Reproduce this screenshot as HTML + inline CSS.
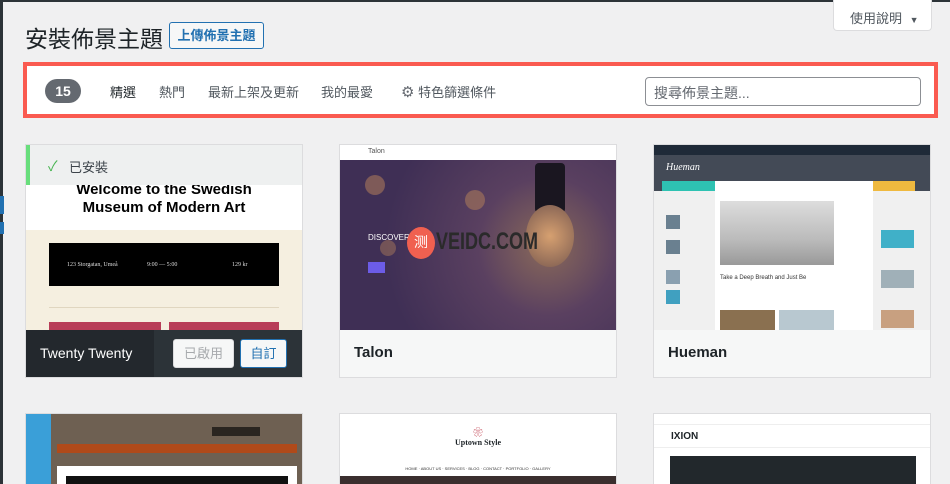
<!DOCTYPE html>
<html><head><meta charset="utf-8"><style>
*{box-sizing:border-box;margin:0;padding:0}
html,body{width:950px;height:484px;overflow:hidden}
body{background:#f0f0f1;font-family:"Liberation Sans","Noto Sans CJK TC",sans-serif;color:#1d2327;position:relative}
.abs{position:absolute}
.card{position:absolute;width:278px;height:234px;background:#fff;border:1px solid #dcdcde;overflow:hidden}
.shot{position:absolute;left:0;top:0;width:276px;height:185px;overflow:hidden}
.foot{position:absolute;left:0;top:185px;width:276px;height:48px;background:#f6f7f7;font-size:15px;font-weight:bold;padding:14px 14px}
</style></head><body>
<div class="abs" style="left:0;top:0;width:950px;height:2px;background:#2c3338"></div>
<div class="abs" style="left:0;top:0;width:3px;height:484px;background:#2c3338"></div>
<div class="abs" style="left:0;top:196px;width:4px;height:18px;background:#2271b1"></div>
<div class="abs" style="left:0;top:222px;width:4px;height:12px;background:#2271b1"></div>

<div class="abs" style="left:25px;top:20px;font-size:23px;color:#1d2327">安裝佈景主題</div>
<div class="abs" style="left:169px;top:22px;width:95px;height:27px;border:1px solid #2271b1;border-radius:3px;background:#f6f7f7;color:#2271b1;font-size:13px;font-weight:bold;text-align:center;line-height:25px">上傳佈景主題</div>
<div class="abs" style="left:833px;top:0;width:99px;height:31px;background:#fff;border:1px solid #dcdcde;border-top:none;border-radius:0 0 4px 4px;font-size:13px;color:#50575e;padding:8px 0 0 16px">使用說明 <span style="font-size:9px;margin-left:4px">▼</span></div>

<div class="abs" style="left:23px;top:62px;width:915px;height:56px;border:4px solid #fa5a50;background:#fff"></div>
<div class="abs" style="left:45px;top:79px;width:36px;height:24px;border-radius:12px;background:#646970;color:#fff;font-size:14px;font-weight:bold;text-align:center;line-height:24px">15</div>
<div class="abs" style="left:110px;top:82px;font-size:13px;color:#1d2327">精選</div>
<div class="abs" style="left:159px;top:82px;font-size:13px;color:#50575e">熱門</div>
<div class="abs" style="left:208px;top:82px;font-size:13px;color:#50575e">最新上架及更新</div>
<div class="abs" style="left:321px;top:82px;font-size:13px;color:#50575e">我的最愛</div>
<div class="abs" style="left:401px;top:82px;font-size:13px;color:#50575e"><span style="font-size:15px;color:#646970">⚙</span> 特色篩選條件</div>
<div class="abs" style="left:645px;top:77px;width:276px;height:29px;border:1px solid #8c8f94;border-radius:4px;font-size:14px;color:#646970;padding:5px 8px">搜尋佈景主題...</div>

<div class="card" style="left:25px;top:144px">
 <div class="shot" style="background:#f5efe0">
  <div class="abs" style="left:0;top:0;width:276px;height:85px;background:#fff"></div>
  <div class="abs" style="left:0;top:36px;width:276px;text-align:center;font-size:15px;font-weight:bold;line-height:18px;color:#000">Welcome to the Swedish<br>Museum of Modern Art</div>
  <div class="abs" style="left:23px;top:98px;width:230px;height:43px;background:#000;color:#ddd;font-family:'Liberation Serif',serif;font-size:6px">
   <span class="abs" style="left:18px;top:19px">123 Storgatan, Umeå</span><span class="abs" style="left:98px;top:19px">9:00 — 5:00</span><span class="abs" style="left:183px;top:19px">129 kr</span></div>
  <div class="abs" style="left:23px;top:162px;width:230px;height:1px;background:#e0d6c0"></div>
  <div class="abs" style="left:23px;top:177px;width:112px;height:10px;background:#b83d58"></div>
  <div class="abs" style="left:143px;top:177px;width:110px;height:10px;background:#b83d58"></div>
  <div class="abs" style="left:0;top:0;width:276px;height:40px;background:#eef0f0;border-left:4px solid #68de7c"></div>
  <div class="abs" style="left:22px;top:11px;color:#46b450;font-size:14px">✓</div>
  <div class="abs" style="left:43px;top:12px;font-size:13px;color:#3c434a">已安裝</div>
 </div>
 <div class="abs" style="left:0;top:185px;width:276px;height:48px;background:#2c3338"></div>
 <div class="abs" style="left:0;top:185px;width:128px;height:48px;background:#23282d"></div>
 <div class="abs" style="left:14px;top:200px;font-size:14px;color:#fff">Twenty Twenty</div>
 <div class="abs" style="left:147px;top:194px;width:61px;height:29px;background:#f6f7f7;border:1px solid #dcdcde;border-radius:3px;color:#a7aaad;font-size:13px;text-align:center;line-height:27px">已啟用</div>
 <div class="abs" style="left:214px;top:194px;width:47px;height:29px;background:#f6f7f7;border:1px solid #2271b1;border-radius:3px;color:#2271b1;font-size:13px;text-align:center;line-height:27px">自訂</div>
</div>

<div class="card" style="left:339px;top:144px">
 <div class="shot" style="background:radial-gradient(circle at 75% 55%,#8a6a5a 0,#5a4060 30%,#3f2f55 70%)">
  <div class="abs" style="left:0;top:0;width:276px;height:15px;background:#fff;font-size:7px;color:#555;padding:3px 0 0 28px">Talon</div>
  <div class="abs" style="left:195px;top:18px;width:30px;height:50px;background:#1a1620;border-radius:4px"></div>
  <div class="abs" style="left:186px;top:60px;width:48px;height:62px;border-radius:50%;background:radial-gradient(circle,#d6a070,#7a5a50)"></div>
  <div class="abs" style="left:25px;top:30px;width:20px;height:20px;border-radius:50%;background:#a8785a;opacity:.6"></div>
  <div class="abs" style="left:125px;top:45px;width:20px;height:20px;border-radius:50%;background:#a8785a;opacity:.6"></div>
  <div class="abs" style="left:40px;top:95px;width:16px;height:16px;border-radius:50%;background:#a8785a;opacity:.5"></div>
  <div class="abs" style="left:28px;top:88px;font-size:8px;color:#fff">DISCOVER</div>
  <div class="abs" style="left:67px;top:82px;width:28px;height:32px;border-radius:50%;background:#f06050;color:#fff;font-size:14px;text-align:center;line-height:30px">测</div>
  <div class="abs" style="left:96px;top:83px;font-size:24px;font-weight:bold;color:#2a2a2a;font-family:'Liberation Sans Narrow','Liberation Sans',sans-serif;transform:scaleX(.75);transform-origin:left">VEIDC.COM</div>
  <div class="abs" style="left:28px;top:117px;width:17px;height:11px;background:#6c5ce7"></div>
 </div>
 <div class="foot">Talon</div>
</div>

<div class="card" style="left:653px;top:144px">
 <div class="shot" style="background:#f0f0f0">
  <div class="abs" style="left:0;top:0;width:276px;height:10px;background:#1f2a38"></div>
  <div class="abs" style="left:0;top:10px;width:276px;height:36px;background:#434a56"></div>
  <div class="abs" style="left:12px;top:17px;font-size:10px;color:#fff;font-style:italic;font-family:'Liberation Serif',serif">Hueman</div>
  <div class="abs" style="left:8px;top:36px;width:53px;height:10px;background:#2ec2b2"></div>
  <div class="abs" style="left:219px;top:36px;width:42px;height:10px;background:#efb93f"></div>
  <div class="abs" style="left:61px;top:36px;width:158px;height:149px;background:#fff"></div>
  <div class="abs" style="left:66px;top:56px;width:114px;height:64px;background:linear-gradient(#ddd,#bbb 60%,#999)"></div>
  <div class="abs" style="left:66px;top:130px;font-size:6px;color:#333">Take a Deep Breath and Just Be</div>
  <div class="abs" style="left:66px;top:165px;width:55px;height:20px;background:#8a7050"></div>
  <div class="abs" style="left:125px;top:165px;width:55px;height:20px;background:#b8c8d0"></div>
  <div class="abs" style="left:12px;top:70px;width:14px;height:14px;background:#6a8090"></div>
  <div class="abs" style="left:12px;top:95px;width:14px;height:14px;background:#6a8090"></div>
  <div class="abs" style="left:12px;top:125px;width:14px;height:14px;background:#8aa0b0"></div>
  <div class="abs" style="left:12px;top:145px;width:14px;height:14px;background:#40a0c0"></div>
  <div class="abs" style="left:227px;top:85px;width:33px;height:18px;background:#40b0c8"></div>
  <div class="abs" style="left:227px;top:125px;width:33px;height:18px;background:#a0b0b8"></div>
  <div class="abs" style="left:227px;top:165px;width:33px;height:18px;background:#c8a080"></div>
 </div>
 <div class="foot">Hueman</div>
</div>

<div class="card" style="left:25px;top:413px;height:71px;border-bottom:none">
 <div class="shot" style="background:#6e6052">
  <div class="abs" style="left:0;top:0;width:25px;height:80px;background:#3a9fd8"></div>
  <div class="abs" style="left:31px;top:30px;width:240px;height:9px;background:#b04a1a"></div>
  <div class="abs" style="left:31px;top:52px;width:240px;height:30px;background:#fff"></div>
  <div class="abs" style="left:40px;top:62px;width:222px;height:20px;background:#111"></div>
  <div class="abs" style="left:186px;top:13px;width:48px;height:9px;background:#2a2520"></div>
 </div>
</div>
<div class="card" style="left:339px;top:413px;height:71px;border-bottom:none">
 <div class="shot" style="background:#fff">
  <div class="abs" style="left:0;top:10px;width:276px;text-align:center;color:#c04050;font-size:10px">❀</div>
  <div class="abs" style="left:0;top:24px;width:276px;text-align:center;font-family:'Liberation Serif',serif;font-size:8px;font-weight:bold">Uptown Style</div>
  <div class="abs" style="left:0;top:52px;width:276px;text-align:center;font-size:4px;color:#333">HOME · ABOUT US · SERVICES · BLOG · CONTACT · PORTFOLIO · GALLERY</div>
  <div class="abs" style="left:0;top:62px;width:276px;height:20px;background:#3a2e2e"></div>
 </div>
</div>
<div class="card" style="left:653px;top:413px;height:71px;border-bottom:none">
 <div class="shot" style="background:#fff">
  <div class="abs" style="left:0;top:10px;width:276px;height:1px;background:#eee"></div>
  <div class="abs" style="left:17px;top:17px;font-size:10px;font-weight:bold">IXION</div>
  <div class="abs" style="left:0;top:33px;width:276px;height:1px;background:#eee"></div>
  <div class="abs" style="left:16px;top:42px;width:246px;height:30px;background:#22282c"></div>
 </div>
</div>
</body></html>
